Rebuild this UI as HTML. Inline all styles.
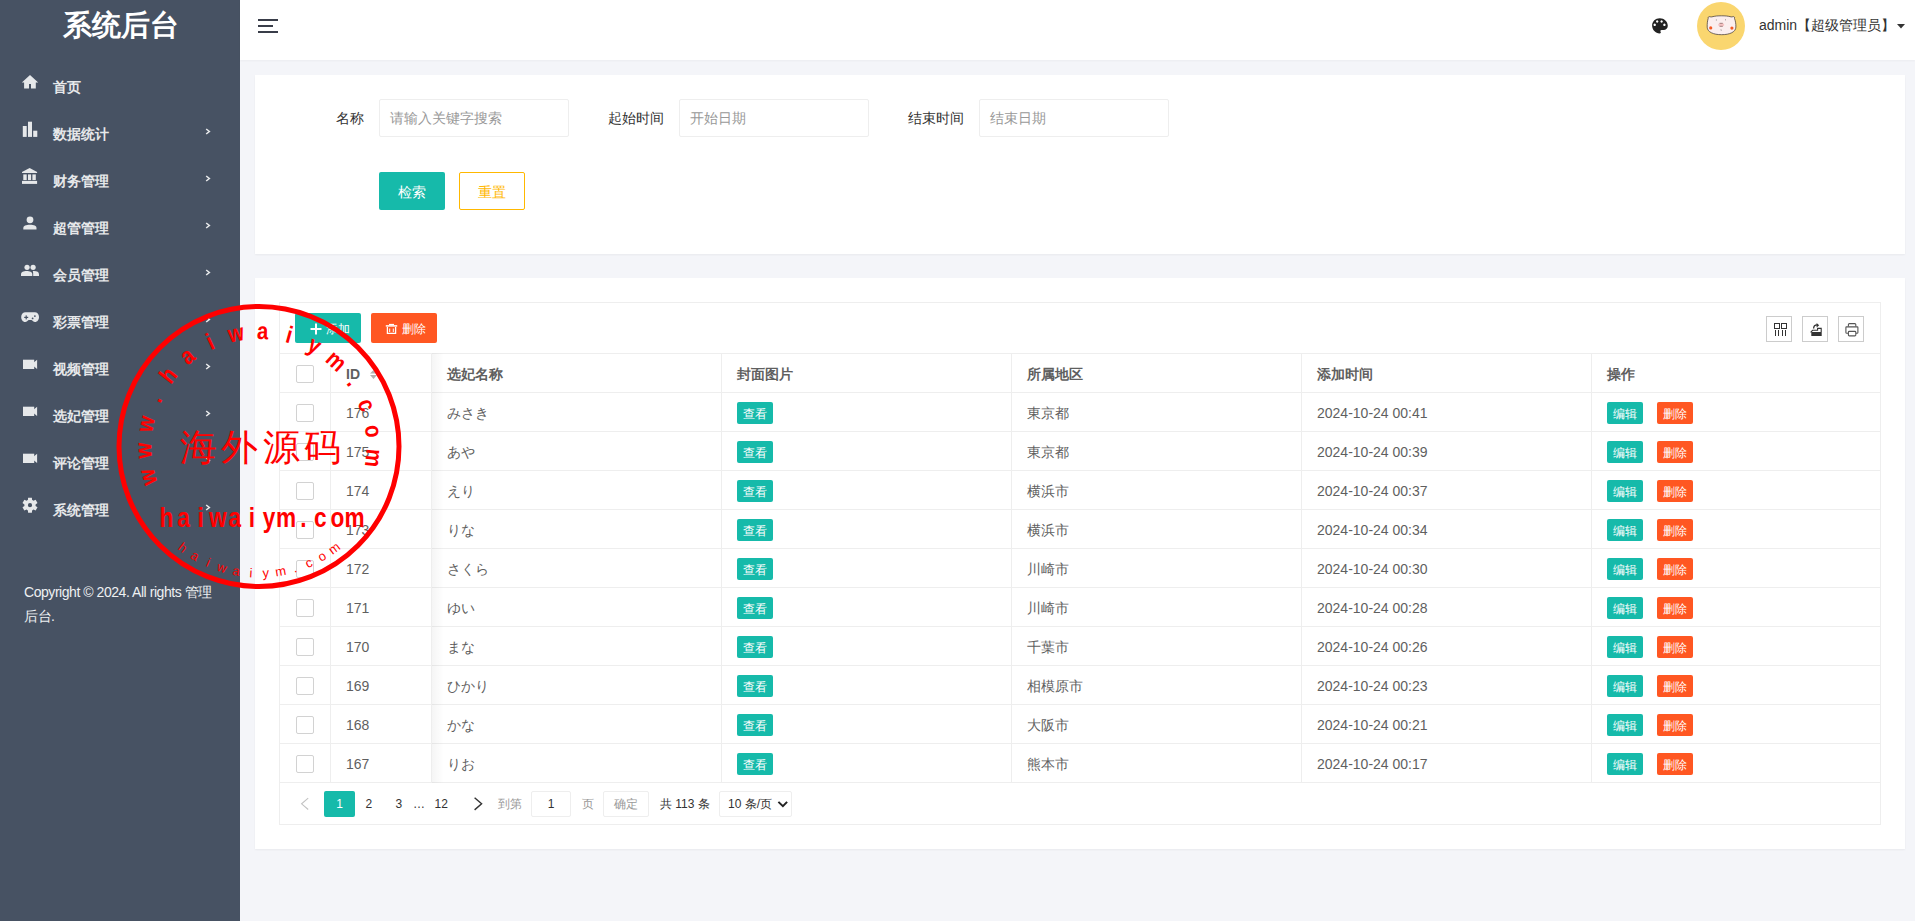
<!DOCTYPE html>
<html><head><meta charset="utf-8">
<style>
*{box-sizing:border-box;margin:0;padding:0}
html,body{width:1915px;height:921px;overflow:hidden}
body{font-family:"Liberation Sans",sans-serif;font-size:14px;color:#5f5f5f;background:#f4f5f9;position:relative}
.abs{position:absolute}
#side{left:0;top:0;width:240px;height:921px;background:#475263}
#side .title{position:absolute;left:0.5px;top:6px;width:240px;text-align:center;color:#fff;font-size:29px;font-weight:bold;line-height:38px}
.mi{position:absolute;left:0;width:240px;height:47px;color:#e6e8ea;font-weight:bold;font-size:14px}
.mi .t{position:absolute;left:53px;top:1px;line-height:47px}
.mi svg.ic{position:absolute;left:18px;top:8px;width:24px;height:24px}
.mi .ar{position:absolute;left:204.5px;top:17.8px;width:6px;height:7px}
.copy{position:absolute;left:24px;top:580px;width:192px;color:#eef0f2;font-size:14px;letter-spacing:-0.45px;line-height:24px}
#head{left:240px;top:0;width:1675px;height:60px;background:#fff;box-shadow:0 1px 2px rgba(0,0,0,.04)}
.card{position:absolute;background:#fff;box-shadow:0 1px 2px 0 rgba(0,0,0,.05)}
.lbl{position:absolute;color:#333;font-size:14px;line-height:38px}
.inp{position:absolute;height:38px;border:1px solid #eee;border-radius:2px;color:#999;font-size:14px;line-height:36px;padding-left:10px;background:#fff}
.btn{position:absolute;text-align:center;color:#fff;border-radius:2px}
.teal{background:#16baaa}
.red{background:#ff5722}
.hl{position:absolute;background:#eee;height:1px}
.vl{position:absolute;background:#eee;width:1px}
.cb{position:absolute;width:18px;height:18px;border:1px solid #d2d2d2;border-radius:2px;background:#fff}
.cell{position:absolute;line-height:38px;color:#5f5f5f;font-size:14px;white-space:nowrap}
.th{font-weight:bold}
.xs{position:absolute;width:36px;height:22px;line-height:24px;font-size:12px;color:#fff;text-align:center;border-radius:2px}
.tool{position:absolute;width:26px;height:26px;border:1px solid #ccc}
.pg{position:absolute;font-size:12px;line-height:26px;color:#333;white-space:nowrap}
</style></head>
<body>
<div id="side" class="abs">
  <div class="title">系统后台</div>
  <!-- menu items inserted -->
  <div class="mi" style="top:63px"><svg class="ic" viewBox="0 0 24 24" fill="#e6e8ea"><path d="M12 4 L3.8 11.6 H6.1 V17.6 H11 V13 H13 V17.6 H17.8 V11.6 H20.2 Z"/></svg><span class="t">首页</span></div>
<div class="mi" style="top:110px"><svg class="ic" viewBox="0 0 24 24" fill="#e6e8ea"><rect x="4.8" y="8" width="3.9" height="10.9"/><rect x="10" y="3.7" width="4" height="15.2"/><rect x="15.2" y="12.7" width="4.1" height="6.2"/></svg><span class="t">数据统计</span><svg class="ar" viewBox="0 0 6 7"><path d="M1.2 1 L4.3 3.5 L1.2 6" stroke="#e6e8ea" stroke-width="1.6" fill="none"/></svg></div>
<div class="mi" style="top:157px"><svg class="ic" viewBox="0 0 24 24" fill="#e6e8ea"><path d="M11.6 2.9 L4 7 V8.1 H19.1 V7 Z"/><rect x="5.3" y="9.4" width="3.4" height="5.7"/><rect x="10" y="9.4" width="3.1" height="5.7"/><rect x="14.4" y="9.4" width="3.4" height="5.7"/><rect x="4" y="15.9" width="15.1" height="3"/></svg><span class="t">财务管理</span><svg class="ar" viewBox="0 0 6 7"><path d="M1.2 1 L4.3 3.5 L1.2 6" stroke="#e6e8ea" stroke-width="1.6" fill="none"/></svg></div>
<div class="mi" style="top:204px"><svg class="ic" viewBox="0 0 24 24" fill="#e6e8ea"><circle cx="12" cy="7.8" r="3.4"/><path d="M5.3 17.4 V16 C5.3 13.6 8 12.7 12 12.7 C16 12.7 18.5 13.6 18.5 16 V17.4 Z"/></svg><span class="t">超管管理</span><svg class="ar" viewBox="0 0 6 7"><path d="M1.2 1 L4.3 3.5 L1.2 6" stroke="#e6e8ea" stroke-width="1.6" fill="none"/></svg></div>
<div class="mi" style="top:251px"><svg class="ic" viewBox="0 0 24 24" fill="#e6e8ea"><circle cx="9.05" cy="8.3" r="2.6"/><circle cx="15.1" cy="8.3" r="2.6"/><path d="M3 16.9 V15.5 C3 12.9 5.5 12 8.6 12 C11.8 12 14.3 12.9 14.3 15.5 V16.9 Z"/><path d="M14.8 12.1 C15.2 12 15.6 12 16 12 C19 12 21 12.9 21 15.5 V16.9 H15.2 V15.5 C15.2 14 15.1 12.9 14.8 12.1 Z"/></svg><span class="t">会员管理</span><svg class="ar" viewBox="0 0 6 7"><path d="M1.2 1 L4.3 3.5 L1.2 6" stroke="#e6e8ea" stroke-width="1.6" fill="none"/></svg></div>
<div class="mi" style="top:298px"><svg class="ic" viewBox="0 0 24 24" fill="#e6e8ea"><path d="M7.5 6.3 H16.8 C19.1 6.3 21 8.3 21 10.9 C21 13.7 19.3 15.9 17 15.9 C15.5 15.9 14.5 14.6 13.5 14 H10.7 C9.7 14.6 8.7 15.9 7.2 15.9 C4.9 15.9 3.2 13.7 3.2 10.9 C3.2 8.3 5.1 6.3 7.5 6.3 Z"/><g fill="#475263"><rect x="6.2" y="10.8" width="4" height="1.2"/><rect x="7.6" y="9.4" width="1.2" height="4"/><circle cx="14.6" cy="12.4" r="0.9"/><circle cx="16.9" cy="10.1" r="0.9"/></g></svg><span class="t">彩票管理</span><svg class="ar" viewBox="0 0 6 7"><path d="M1.2 1 L4.3 3.5 L1.2 6" stroke="#e6e8ea" stroke-width="1.6" fill="none"/></svg></div>
<div class="mi" style="top:345px"><svg class="ic" viewBox="0 0 24 24" fill="#e6e8ea"><rect x="5" y="6.7" width="11.2" height="9.3"/><path d="M16 9.2 L19.1 6.8 V16 L16 13.4 Z"/></svg><span class="t">视频管理</span><svg class="ar" viewBox="0 0 6 7"><path d="M1.2 1 L4.3 3.5 L1.2 6" stroke="#e6e8ea" stroke-width="1.6" fill="none"/></svg></div>
<div class="mi" style="top:392px"><svg class="ic" viewBox="0 0 24 24" fill="#e6e8ea"><rect x="5" y="6.7" width="11.2" height="9.3"/><path d="M16 9.2 L19.1 6.8 V16 L16 13.4 Z"/></svg><span class="t">选妃管理</span><svg class="ar" viewBox="0 0 6 7"><path d="M1.2 1 L4.3 3.5 L1.2 6" stroke="#e6e8ea" stroke-width="1.6" fill="none"/></svg></div>
<div class="mi" style="top:439px"><svg class="ic" viewBox="0 0 24 24" fill="#e6e8ea"><rect x="5" y="6.7" width="11.2" height="9.3"/><path d="M16 9.2 L19.1 6.8 V16 L16 13.4 Z"/></svg><span class="t">评论管理</span><svg class="ar" viewBox="0 0 6 7"><path d="M1.2 1 L4.3 3.5 L1.2 6" stroke="#e6e8ea" stroke-width="1.6" fill="none"/></svg></div>
<div class="mi" style="top:486px"><svg class="ic" viewBox="0 0 24 24" fill="#e6e8ea"><path fill-rule="evenodd" d="M14.80 6.35 L14.10 6.01 L13.89 3.63 L10.11 3.63 L9.90 6.01 L9.20 6.35 L8.55 6.79 L6.39 5.78 L4.50 9.05 L6.45 10.42 L6.40 11.20 L6.45 11.98 L4.50 13.35 L6.39 16.62 L8.55 15.61 L9.20 16.05 L9.90 16.39 L10.11 18.77 L13.89 18.77 L14.10 16.39 L14.80 16.05 L15.45 15.61 L17.61 16.62 L19.50 13.35 L17.55 11.98 L17.60 11.20 L17.55 10.42 L19.50 9.05 L17.61 5.78 L15.45 6.79 Z M14.1 11.2 A2.1 2.1 0 1 0 9.9 11.2 A2.1 2.1 0 1 0 14.1 11.2 Z"/></svg><span class="t">系统管理</span><svg class="ar" viewBox="0 0 6 7"><path d="M1.2 1 L4.3 3.5 L1.2 6" stroke="#e6e8ea" stroke-width="1.6" fill="none"/></svg></div>
  <div class="copy">Copyright © 2024. All rights 管理后台.</div>
</div>
<div id="head" class="abs">
  <svg class="abs" style="left:18px;top:18px" width="20" height="16" viewBox="0 0 20 16"><rect x="0" y="1" width="20" height="2" fill="#393d49"/><rect x="0" y="7" width="15" height="2" fill="#393d49"/><rect x="0" y="13" width="20" height="2" fill="#393d49"/></svg>
</div>
<div class="card" style="left:255px;top:75px;width:1650px;height:179px"></div>
<div class="lbl" style="left:336px;top:98.5px">名称</div>
<div class="inp" style="left:379px;top:99px;width:190px">请输入关键字搜索</div>
<div class="lbl" style="left:608px;top:99px">起始时间</div>
<div class="inp" style="left:679px;top:99px;width:190px">开始日期</div>
<div class="lbl" style="left:908px;top:99px">结束时间</div>
<div class="inp" style="left:979px;top:99px;width:190px">结束日期</div>
<div class="btn teal" style="left:379px;top:172px;width:66px;height:38px;line-height:40px;font-size:14px">检索</div>
<div class="btn" style="left:459px;top:172px;width:66px;height:38px;line-height:38px;font-size:14px;border:1px solid #ffb800;color:#ffb800;background:#fff">重置</div>
<div class="card" style="left:255px;top:278px;width:1650px;height:571px"></div>
<div class="abs" style="left:279px;top:302px;width:1602px;height:523px;border:1px solid #eee"></div>
<div class="btn teal" style="left:295px;top:313px;width:66px;height:30px"></div>
<svg class="abs" style="left:310px;top:323px" width="12" height="12" viewBox="0 0 12 12"><path d="M6 0.5 V11.5 M0.5 6 H11.5" stroke="#fff" stroke-width="2"/></svg>
<div class="abs" style="left:326px;top:314px;line-height:30px;font-size:12px;color:#fff">添加</div>
<div class="btn red" style="left:371px;top:313px;width:66px;height:30px"></div>
<svg class="abs" style="left:385px;top:323px" width="13" height="12" viewBox="0 0 13 12"><path d="M4 1.5 H9" stroke="#fff" stroke-width="1.2"/><path d="M0.8 2.9 H12.2" stroke="#fff" stroke-width="1.5"/><path d="M2.4 4 V10.4 H10.6 V4" stroke="#fff" stroke-width="1.3" fill="none"/><path d="M4.7 5.5 V9 M8.3 5.5 V9" stroke="#fff" stroke-width="1"/></svg>
<div class="abs" style="left:402px;top:314px;line-height:30px;font-size:12px;color:#fff">删除</div>
<div class="tool" style="left:1766px;top:316px"></div>
<div class="tool" style="left:1802px;top:316px"></div>
<div class="tool" style="left:1838px;top:316px"></div>
<svg class="abs" style="left:1766px;top:316px" width="26" height="26" viewBox="0 0 26 26"><g stroke="#333" stroke-width="1" fill="none"><rect x="8.5" y="7.5" width="5" height="5"/><rect x="15.5" y="7.5" width="5" height="5"/><path d="M9.5 14 V20 M12.5 14 V20 M16.5 14 V20 M19.5 14 V20"/></g></svg>
<svg class="abs" style="left:1802px;top:316px" width="26" height="26" viewBox="0 0 26 26"><path d="M9.3 16 H19.7 V20 H9.3 Z" fill="#333"/><path d="M8.6 16.4 L10.6 14.3 H15.6 V12.4 H19.2 V16" stroke="#333" stroke-width="1.1" fill="none"/><path d="M11.6 12.6 C11.6 10 13 8.9 15.3 8.9" stroke="#333" stroke-width="1.3" fill="none"/><path d="M14.6 7.1 L17.2 9.2 L14.6 11.5 Z" fill="#333"/></svg>
<svg class="abs" style="left:1838px;top:316px" width="26" height="26" viewBox="0 0 26 26"><g stroke="#555" stroke-width="1.1" fill="none"><path d="M10.4 10.4 V8.6 Q10.4 7.6 11.4 7.6 H16.8 Q17.8 7.6 17.8 8.6 V10.4"/><path d="M10 17.3 H8.8 Q7.9 17.3 7.9 16.4 V11.5 Q7.9 10.9 8.5 10.9 H19.3 Q19.9 10.9 19.9 11.5 V16.4 Q19.9 17.3 19 17.3 H18"/><path d="M10.4 19 V16.3 Q10.4 15.4 11.3 15.4 H16.9 Q17.8 15.4 17.8 16.3 V19 Q17.8 19.9 16.9 19.9 H11.3 Q10.4 19.9 10.4 19 Z"/></g></svg>
<div class="hl" style="left:280px;top:353px;width:1600px"></div>
<div class="hl" style="left:280px;top:392px;width:1600px"></div>
<div class="hl" style="left:280px;top:431px;width:1600px"></div>
<div class="hl" style="left:280px;top:470px;width:1600px"></div>
<div class="hl" style="left:280px;top:509px;width:1600px"></div>
<div class="hl" style="left:280px;top:548px;width:1600px"></div>
<div class="hl" style="left:280px;top:587px;width:1600px"></div>
<div class="hl" style="left:280px;top:626px;width:1600px"></div>
<div class="hl" style="left:280px;top:665px;width:1600px"></div>
<div class="hl" style="left:280px;top:704px;width:1600px"></div>
<div class="hl" style="left:280px;top:743px;width:1600px"></div>
<div class="hl" style="left:280px;top:782px;width:1600px"></div>
<div class="vl" style="left:330px;top:353px;height:430px"></div>
<div class="vl" style="left:431px;top:353px;height:430px"></div>
<div class="vl" style="left:721px;top:353px;height:430px"></div>
<div class="vl" style="left:1011px;top:353px;height:430px"></div>
<div class="vl" style="left:1301px;top:353px;height:430px"></div>
<div class="vl" style="left:1591px;top:353px;height:430px"></div>
<div class="cb" style="left:296px;top:365px"></div>
<div class="cell th" style="left:346px;top:355px">ID</div>
<div class="cell th" style="left:447px;top:355px">选妃名称</div>
<div class="cell th" style="left:737px;top:355px">封面图片</div>
<div class="cell th" style="left:1027px;top:355px">所属地区</div>
<div class="cell th" style="left:1317px;top:355px">添加时间</div>
<div class="cell th" style="left:1607px;top:355px">操作</div>
<svg class="abs" style="left:369px;top:369px" width="9" height="11" viewBox="0 0 9 11"><path d="M4.5 1 L8 4.5 H1 Z" fill="#b2b2b2"/><path d="M1 6 H8 L4.5 10 Z" fill="#b2b2b2"/></svg>
<div class="abs" style="left:432px;top:353px;width:12px;height:430px;background:linear-gradient(to right,rgba(0,0,0,.04),rgba(0,0,0,0))"></div>
<div class="cb" style="left:296px;top:404px"></div>
<div class="cell" style="left:346px;top:394px">176</div>
<div class="cell" style="left:447px;top:394px">みさき</div>
<div class="xs teal" style="left:737px;top:402px">查看</div>
<div class="cell" style="left:1027px;top:394px">東京都</div>
<div class="cell" style="left:1317px;top:394px">2024-10-24 00:41</div>
<div class="xs teal" style="left:1607px;top:402px">编辑</div>
<div class="xs red" style="left:1657px;top:402px">删除</div>
<div class="cb" style="left:296px;top:443px"></div>
<div class="cell" style="left:346px;top:433px">175</div>
<div class="cell" style="left:447px;top:433px">あや</div>
<div class="xs teal" style="left:737px;top:441px">查看</div>
<div class="cell" style="left:1027px;top:433px">東京都</div>
<div class="cell" style="left:1317px;top:433px">2024-10-24 00:39</div>
<div class="xs teal" style="left:1607px;top:441px">编辑</div>
<div class="xs red" style="left:1657px;top:441px">删除</div>
<div class="cb" style="left:296px;top:482px"></div>
<div class="cell" style="left:346px;top:472px">174</div>
<div class="cell" style="left:447px;top:472px">えり</div>
<div class="xs teal" style="left:737px;top:480px">查看</div>
<div class="cell" style="left:1027px;top:472px">横浜市</div>
<div class="cell" style="left:1317px;top:472px">2024-10-24 00:37</div>
<div class="xs teal" style="left:1607px;top:480px">编辑</div>
<div class="xs red" style="left:1657px;top:480px">删除</div>
<div class="cb" style="left:296px;top:521px"></div>
<div class="cell" style="left:346px;top:511px">173</div>
<div class="cell" style="left:447px;top:511px">りな</div>
<div class="xs teal" style="left:737px;top:519px">查看</div>
<div class="cell" style="left:1027px;top:511px">横浜市</div>
<div class="cell" style="left:1317px;top:511px">2024-10-24 00:34</div>
<div class="xs teal" style="left:1607px;top:519px">编辑</div>
<div class="xs red" style="left:1657px;top:519px">删除</div>
<div class="cb" style="left:296px;top:560px"></div>
<div class="cell" style="left:346px;top:550px">172</div>
<div class="cell" style="left:447px;top:550px">さくら</div>
<div class="xs teal" style="left:737px;top:558px">查看</div>
<div class="cell" style="left:1027px;top:550px">川崎市</div>
<div class="cell" style="left:1317px;top:550px">2024-10-24 00:30</div>
<div class="xs teal" style="left:1607px;top:558px">编辑</div>
<div class="xs red" style="left:1657px;top:558px">删除</div>
<div class="cb" style="left:296px;top:599px"></div>
<div class="cell" style="left:346px;top:589px">171</div>
<div class="cell" style="left:447px;top:589px">ゆい</div>
<div class="xs teal" style="left:737px;top:597px">查看</div>
<div class="cell" style="left:1027px;top:589px">川崎市</div>
<div class="cell" style="left:1317px;top:589px">2024-10-24 00:28</div>
<div class="xs teal" style="left:1607px;top:597px">编辑</div>
<div class="xs red" style="left:1657px;top:597px">删除</div>
<div class="cb" style="left:296px;top:638px"></div>
<div class="cell" style="left:346px;top:628px">170</div>
<div class="cell" style="left:447px;top:628px">まな</div>
<div class="xs teal" style="left:737px;top:636px">查看</div>
<div class="cell" style="left:1027px;top:628px">千葉市</div>
<div class="cell" style="left:1317px;top:628px">2024-10-24 00:26</div>
<div class="xs teal" style="left:1607px;top:636px">编辑</div>
<div class="xs red" style="left:1657px;top:636px">删除</div>
<div class="cb" style="left:296px;top:677px"></div>
<div class="cell" style="left:346px;top:667px">169</div>
<div class="cell" style="left:447px;top:667px">ひかり</div>
<div class="xs teal" style="left:737px;top:675px">查看</div>
<div class="cell" style="left:1027px;top:667px">相模原市</div>
<div class="cell" style="left:1317px;top:667px">2024-10-24 00:23</div>
<div class="xs teal" style="left:1607px;top:675px">编辑</div>
<div class="xs red" style="left:1657px;top:675px">删除</div>
<div class="cb" style="left:296px;top:716px"></div>
<div class="cell" style="left:346px;top:706px">168</div>
<div class="cell" style="left:447px;top:706px">かな</div>
<div class="xs teal" style="left:737px;top:714px">查看</div>
<div class="cell" style="left:1027px;top:706px">大阪市</div>
<div class="cell" style="left:1317px;top:706px">2024-10-24 00:21</div>
<div class="xs teal" style="left:1607px;top:714px">编辑</div>
<div class="xs red" style="left:1657px;top:714px">删除</div>
<div class="cb" style="left:296px;top:755px"></div>
<div class="cell" style="left:346px;top:745px">167</div>
<div class="cell" style="left:447px;top:745px">りお</div>
<div class="xs teal" style="left:737px;top:753px">查看</div>
<div class="cell" style="left:1027px;top:745px">熊本市</div>
<div class="cell" style="left:1317px;top:745px">2024-10-24 00:17</div>
<div class="xs teal" style="left:1607px;top:753px">编辑</div>
<div class="xs red" style="left:1657px;top:753px">删除</div>
<div class="btn teal" style="left:324px;top:791px;width:31px;height:26px;line-height:26px;font-size:12px">1</div>
<div class="pg" style="left:365.5px;top:791px;color:#333">2</div>
<div class="pg" style="left:395.5px;top:791px;color:#333">3</div>
<div class="pg" style="left:413px;top:791px;color:#333">…</div>
<div class="pg" style="left:434.5px;top:791px;color:#333">12</div>
<div class="pg" style="left:498px;top:791px;color:#999">到第</div>
<div class="pg" style="left:582px;top:791px;color:#999">页</div>
<div class="pg" style="left:660px;top:791px;color:#333">共 113 条</div>
<svg class="abs" style="left:300px;top:797px" width="10" height="14" viewBox="0 0 10 14"><path d="M8.2 1.1 L1.6 6.8 L8.2 12.5" stroke="#c2c2c2" stroke-width="1.1" fill="none"/></svg>
<svg class="abs" style="left:473px;top:797px" width="10" height="14" viewBox="0 0 10 14"><path d="M1.6 0.7 L8.6 6.8 L1.6 12.9" stroke="#333" stroke-width="1.4" fill="none"/></svg>
<svg class="abs" style="left:776px;top:799px" width="13" height="10" viewBox="0 0 13 10"><path d="M2.4 2.9 L6.9 7.2 L11.1 2.9" stroke="#222" stroke-width="2" fill="none"/></svg>
<div class="abs" style="left:531px;top:791px;width:40px;height:26px;border:1px solid #eee;border-radius:2px;text-align:center;line-height:24px;font-size:12px;color:#333">1</div>
<div class="abs" style="left:603px;top:791px;width:46px;height:26px;border:1px solid #eee;border-radius:2px;text-align:center;line-height:24px;font-size:12px;color:#999">确定</div>
<div class="abs" style="left:719px;top:791px;width:73px;height:26px;border:1px solid #eee;border-radius:2px;line-height:24px;font-size:12px;color:#333;padding-left:8px">10 条/页</div>
<svg class="abs" style="left:1652px;top:18px" width="16" height="16" viewBox="0 0 16 16"><path fill="#222" fill-rule="evenodd" d="M7.8 0.2 C3.4 0.2 0.1 3.4 0.1 7.4 C0.1 11.6 3.6 15.4 7.6 15.4 C8.9 15.4 9.1 14.6 8.6 13.8 C8.1 13 8.5 12 9.6 12 H11.6 C14 12 15.8 10.3 15.8 7.7 C15.8 3.4 12.2 0.2 7.8 0.2 Z M5.2 2.3 A1.2 1.2 0 1 0 5.21 2.3 Z M9.6 2.3 A1.2 1.2 0 1 0 9.61 2.3 Z M2.7 5.6 A1.2 1.2 0 1 0 2.71 5.6 Z M12.4 5.6 A1.2 1.2 0 1 0 12.41 5.6 Z"/></svg>
<svg class="abs" style="left:1697px;top:2px" width="48" height="48" viewBox="0 0 48 48">
<circle cx="24" cy="24" r="24" fill="#fad66f"/>
<path d="M11.2 16.4 C10.9 15.1 11.7 14.4 12.9 14.7 C13.5 14.9 14.1 15 14.7 14.9 C18 14 21 13.8 24.5 13.8 C28 13.8 31 14 34.2 14.9 C34.8 15 35.4 14.8 36 14.6 C37.2 14.4 37.9 15.3 37.5 16.5 C38.3 18.5 39 21.5 38.9 25 C38.8 30 32.8 32.7 24.6 32.7 C16.4 32.7 10.3 30 10.2 25.2 C10.1 21.6 10.5 18.5 11.2 16.4 Z" fill="#fbeeee" stroke="#3a3030" stroke-width="0.7"/>
<ellipse cx="24.2" cy="22.8" rx="3" ry="1.8" fill="#f6c2c2"/>
<path d="M22.6 21.3 H25.8 M22.6 24.3 H25.8" stroke="#6a4a4a" stroke-width="0.6"/>
<circle cx="13.7" cy="25.9" r="1.6" fill="#f45a24"/><circle cx="34.9" cy="26.1" r="1.6" fill="#f45a24"/>
<path d="M19.4 17.4 v1.2 M28.5 17.2 v1.2" stroke="#555" stroke-width="0.5"/>
<path d="M23.8 27.3 q0.8 0.5 0.4 1.5" stroke="#555" stroke-width="0.5" fill="none"/>
</svg>
<div class="abs" style="left:1759px;top:16px;line-height:18px;font-size:14px;color:#333;white-space:nowrap">admin【超级管理员】</div>
<svg class="abs" style="left:1897px;top:24px" width="8" height="5" viewBox="0 0 8 5"><path d="M0 0 H8 L4 4.5 Z" fill="#333"/></svg>
<svg class="abs" style="left:0;top:0;pointer-events:none" width="1915" height="921" viewBox="0 0 1915 921">
<circle cx="259" cy="446.5" r="140" fill="none" stroke="#f00" stroke-width="5"/>
<text x="0" y="0" transform="translate(155.41,475.23) rotate(-105.50) scale(0.85,1)" text-anchor="middle" font-family="Liberation Sans" font-weight="bold" font-size="24" fill="#f00">w</text>
<text x="0" y="0" transform="translate(151.57,450.40) rotate(-92.08) scale(0.85,1)" text-anchor="middle" font-family="Liberation Sans" font-weight="bold" font-size="24" fill="#f00">w</text>
<text x="0" y="0" transform="translate(153.60,425.36) rotate(-78.66) scale(0.85,1)" text-anchor="middle" font-family="Liberation Sans" font-weight="bold" font-size="24" fill="#f00">w</text>
<text x="0" y="0" transform="translate(161.38,401.48) rotate(-65.24) scale(0.85,1)" text-anchor="middle" font-family="Liberation Sans" font-weight="bold" font-size="24" fill="#f00">.</text>
<text x="0" y="0" transform="translate(174.50,380.05) rotate(-51.82) scale(0.85,1)" text-anchor="middle" font-family="Liberation Sans" font-weight="bold" font-size="24" fill="#f00">h</text>
<text x="0" y="0" transform="translate(192.23,362.25) rotate(-38.40) scale(0.85,1)" text-anchor="middle" font-family="Liberation Sans" font-weight="bold" font-size="24" fill="#f00">a</text>
<text x="0" y="0" transform="translate(213.60,349.06) rotate(-24.98) scale(0.85,1)" text-anchor="middle" font-family="Liberation Sans" font-weight="bold" font-size="24" fill="#f00">i</text>
<text x="0" y="0" transform="translate(237.46,341.18) rotate(-11.56) scale(0.85,1)" text-anchor="middle" font-family="Liberation Sans" font-weight="bold" font-size="24" fill="#f00">w</text>
<text x="0" y="0" transform="translate(262.49,339.06) rotate(1.86) scale(0.85,1)" text-anchor="middle" font-family="Liberation Sans" font-weight="bold" font-size="24" fill="#f00">a</text>
<text x="0" y="0" transform="translate(287.33,342.80) rotate(15.28) scale(0.85,1)" text-anchor="middle" font-family="Liberation Sans" font-weight="bold" font-size="24" fill="#f00">i</text>
<text x="0" y="0" transform="translate(310.62,352.21) rotate(28.70) scale(0.85,1)" text-anchor="middle" font-family="Liberation Sans" font-weight="bold" font-size="24" fill="#f00">y</text>
<text x="0" y="0" transform="translate(331.10,366.76) rotate(42.12) scale(0.85,1)" text-anchor="middle" font-family="Liberation Sans" font-weight="bold" font-size="24" fill="#f00">m</text>
<text x="0" y="0" transform="translate(347.64,385.67) rotate(55.54) scale(0.85,1)" text-anchor="middle" font-family="Liberation Sans" font-weight="bold" font-size="24" fill="#f00">.</text>
<text x="0" y="0" transform="translate(359.33,407.91) rotate(68.96) scale(0.85,1)" text-anchor="middle" font-family="Liberation Sans" font-weight="bold" font-size="24" fill="#f00">c</text>
<text x="0" y="0" transform="translate(365.55,432.25) rotate(82.38) scale(0.85,1)" text-anchor="middle" font-family="Liberation Sans" font-weight="bold" font-size="24" fill="#f00">o</text>
<text x="0" y="0" transform="translate(365.95,457.36) rotate(95.80) scale(0.85,1)" text-anchor="middle" font-family="Liberation Sans" font-weight="bold" font-size="24" fill="#f00">m</text>
<text x="0" y="0" transform="translate(180.16,551.12) rotate(37.00)" text-anchor="middle" font-family="Liberation Sans" font-size="13" fill="#f00">h</text>
<text x="0" y="0" transform="translate(192.87,559.58) rotate(30.32)" text-anchor="middle" font-family="Liberation Sans" font-size="13" fill="#f00">a</text>
<text x="0" y="0" transform="translate(206.48,566.51) rotate(23.64)" text-anchor="middle" font-family="Liberation Sans" font-size="13" fill="#f00">i</text>
<text x="0" y="0" transform="translate(220.80,571.81) rotate(16.95)" text-anchor="middle" font-family="Liberation Sans" font-size="13" fill="#f00">w</text>
<text x="0" y="0" transform="translate(235.64,575.40) rotate(10.27)" text-anchor="middle" font-family="Liberation Sans" font-size="13" fill="#f00">a</text>
<text x="0" y="0" transform="translate(250.80,577.24) rotate(3.59)" text-anchor="middle" font-family="Liberation Sans" font-size="13" fill="#f00">i</text>
<text x="0" y="0" transform="translate(266.06,577.31) rotate(-3.09)" text-anchor="middle" font-family="Liberation Sans" font-size="13" fill="#f00">y</text>
<text x="0" y="0" transform="translate(281.24,575.60) rotate(-9.77)" text-anchor="middle" font-family="Liberation Sans" font-size="13" fill="#f00">m</text>
<text x="0" y="0" transform="translate(296.11,572.13) rotate(-16.45)" text-anchor="middle" font-family="Liberation Sans" font-size="13" fill="#f00">.</text>
<text x="0" y="0" transform="translate(310.47,566.96) rotate(-23.14)" text-anchor="middle" font-family="Liberation Sans" font-size="13" fill="#f00">c</text>
<text x="0" y="0" transform="translate(324.14,560.16) rotate(-29.82)" text-anchor="middle" font-family="Liberation Sans" font-size="13" fill="#f00">o</text>
<text x="0" y="0" transform="translate(336.92,551.81) rotate(-36.50)" text-anchor="middle" font-family="Liberation Sans" font-size="13" fill="#f00">m</text>
<text x="262.6" y="460" text-anchor="middle" font-family="Liberation Sans" font-weight="300" font-size="37" letter-spacing="4.3" fill="#f00">海外源码</text>
<text x="0" y="0" transform="translate(166.50,527) scale(0.84,1)" text-anchor="middle" font-family="Liberation Sans" font-weight="bold" font-size="27" fill="#f00">h</text>
<text x="0" y="0" transform="translate(183.60,527) scale(0.84,1)" text-anchor="middle" font-family="Liberation Sans" font-weight="bold" font-size="27" fill="#f00">a</text>
<text x="0" y="0" transform="translate(200.70,527) scale(0.84,1)" text-anchor="middle" font-family="Liberation Sans" font-weight="bold" font-size="27" fill="#f00">i</text>
<text x="0" y="0" transform="translate(217.80,527) scale(0.84,1)" text-anchor="middle" font-family="Liberation Sans" font-weight="bold" font-size="27" fill="#f00">w</text>
<text x="0" y="0" transform="translate(234.90,527) scale(0.84,1)" text-anchor="middle" font-family="Liberation Sans" font-weight="bold" font-size="27" fill="#f00">a</text>
<text x="0" y="0" transform="translate(252.00,527) scale(0.84,1)" text-anchor="middle" font-family="Liberation Sans" font-weight="bold" font-size="27" fill="#f00">i</text>
<text x="0" y="0" transform="translate(269.10,527) scale(0.84,1)" text-anchor="middle" font-family="Liberation Sans" font-weight="bold" font-size="27" fill="#f00">y</text>
<text x="0" y="0" transform="translate(286.20,527) scale(0.84,1)" text-anchor="middle" font-family="Liberation Sans" font-weight="bold" font-size="27" fill="#f00">m</text>
<text x="0" y="0" transform="translate(303.30,527) scale(0.84,1)" text-anchor="middle" font-family="Liberation Sans" font-weight="bold" font-size="27" fill="#f00">.</text>
<text x="0" y="0" transform="translate(320.40,527) scale(0.84,1)" text-anchor="middle" font-family="Liberation Sans" font-weight="bold" font-size="27" fill="#f00">c</text>
<text x="0" y="0" transform="translate(337.50,527) scale(0.84,1)" text-anchor="middle" font-family="Liberation Sans" font-weight="bold" font-size="27" fill="#f00">o</text>
<text x="0" y="0" transform="translate(354.60,527) scale(0.84,1)" text-anchor="middle" font-family="Liberation Sans" font-weight="bold" font-size="27" fill="#f00">m</text>
</svg>
</body></html>
